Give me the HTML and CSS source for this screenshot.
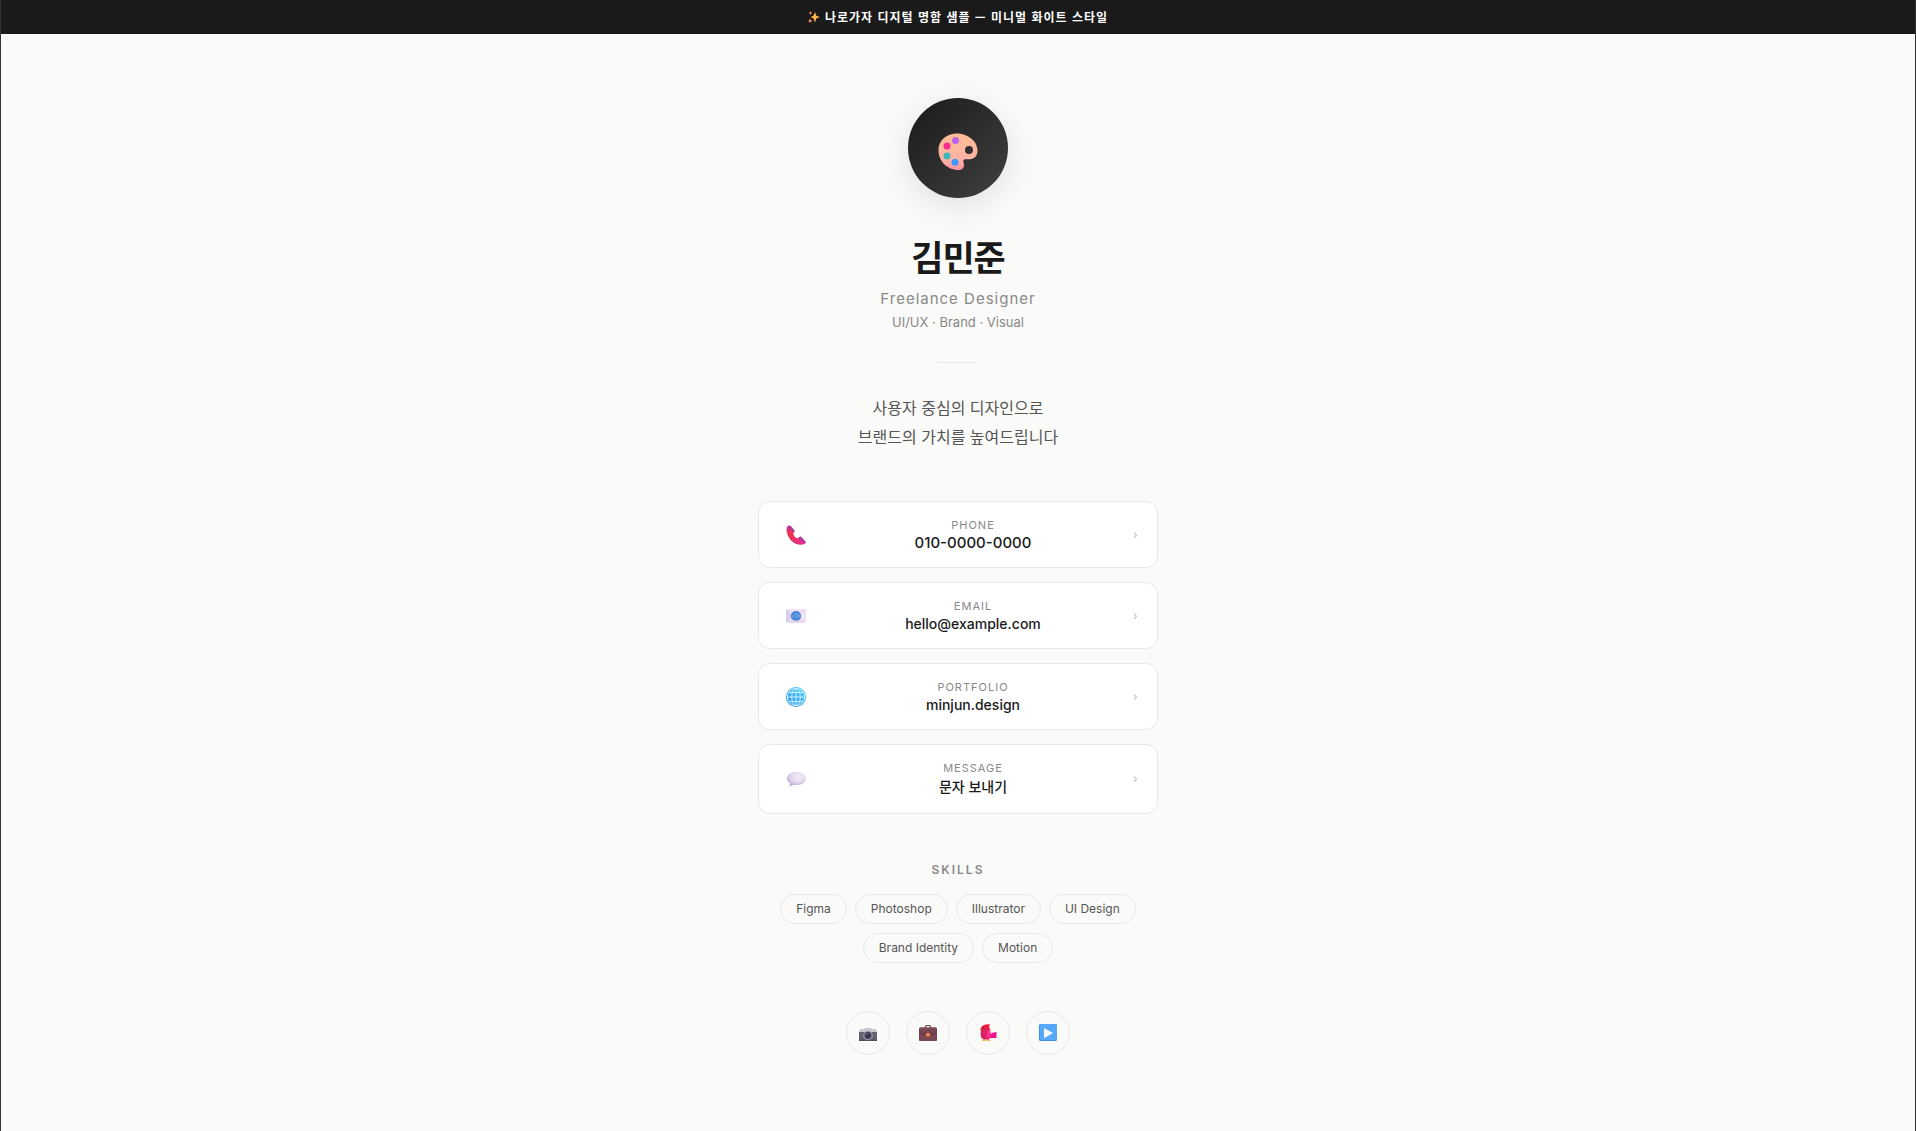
FILE: index.html
```html
<!DOCTYPE html>
<html lang="ko">
<head>
<meta charset="utf-8">
<meta name="viewport" content="width=device-width, initial-scale=1">
<title>김민준 — Freelance Designer</title>
<link rel="stylesheet" href="styles.css">
</head>
<body>
<div class="banner">
  <svg class="banner-icon" viewBox="0 0 24 24" aria-hidden="true"><path fill="#ffb54c" d="M14 2l2.6 7.4L24 12l-7.4 3L14 23l-3-8-6-3 6-2.6z"/><path fill="#ff9a62" d="M5 0l1.200 3L9 4 6.200 5.200 5 8 3.800 5.200 1 4l2.800-1zM4 15l1.500 3.500L9 20l-3.500 1.300L4 24l-1.300-2.700L0 20l2.700-1.500z"/></svg>
  <span>나로가자 디지털 명함 샘플 — 미니멀 화이트 스타일</span>
</div>
<main class="card">
  <header class="profile">
    <div class="avatar">
      <svg viewBox="0 0 40 38" aria-hidden="true">
        <defs>
          <linearGradient id="pal" x1="0" y1="0" x2="0" y2="1"><stop offset="0" stop-color="#ffbd94"/><stop offset=".7" stop-color="#ffb3a5"/><stop offset="1" stop-color="#f9929f"/></linearGradient>
        </defs>
        <path fill="url(#pal)" fill-rule="evenodd" d="M18 .500C28 0 39.500 7 39.500 17.500c0 6-3.500 8.800-9 8.800h-3c-2 0-2.600 1.200-2 3.200.8 2.500 1.200 7.500-5 7.500C9 37 .500 28 .500 17 .500 7.500 8 1 18 .500zM31 13a4 4 0 1 0 0 8 4 4 0 0 0 0-8z"/>
        <circle cx="17.500" cy="7.500" r="3.500" fill="#b963f0"/><circle cx="9" cy="13" r="3.500" fill="#f82f92"/><circle cx="9" cy="23" r="3.500" fill="#40b9b9"/><circle cx="17" cy="29.300" r="3.500" fill="#4096f8"/>
      </svg>
    </div>
    <h1 class="name">김민준</h1>
    <p class="role">Freelance Designer</p>
    <p class="fields">UI/UX · Brand · Visual</p>
  </header>
  <hr class="divider">
  <p class="bio">사용자 중심의 디자인으로<br>브랜드의 가치를 높여드립니다</p>
  <nav class="contacts" aria-label="연락처">
    <a class="contact" href="tel:010-0000-0000">
      <span class="contact-icon"><svg viewBox="0 0 20 20" aria-hidden="true"><defs><linearGradient id="ph" x1="0" y1="0" x2="1" y2="1"><stop offset="0" stop-color="#b03a9c"/><stop offset=".25" stop-color="#ef3350"/><stop offset=".65" stop-color="#ec3070"/><stop offset="1" stop-color="#d8309f"/></linearGradient></defs><path fill="url(#ph)" d="M1 2C2 0 4 0 5 1.500l3.500 4c.8 1-1.500 2.700-1.200 3.500.7 2.200 2.200 3.700 4.200 4.300 1 .3 2-2.200 3.200-1.600l4.500 4.500c1 1 .6 2-.4 2.600-3 1.700-8.500 1.500-12.500-2.200C2 12.800-.500 6 1 2z"/><path fill="#a23aad" d="M4.500 1l4 4.500-1.500 2L3 2zM14.500 11.500l5 5-2 .5-4.500-4z"/></svg></span>
      <span class="contact-text"><span class="contact-label">PHONE</span><span class="contact-value contact-number">010-0000-0000</span></span>
      <span class="chevron" aria-hidden="true">›</span>
    </a>
    <a class="contact" href="mailto:hello@example.com">
      <span class="contact-icon"><svg viewBox="0 0 20 20" aria-hidden="true"><rect y="3" width="20" height="14" rx="1" fill="#e4d8ee"/><path fill="#d9cbea" d="M0 16V4l8 6z"/><path fill="#f0e3f2" d="M20 16V4l-8 6zM1 3h18l-9 7z"/><circle cx="10" cy="10" r="5" fill="#327cd4"/><path fill="none" stroke="#a5c2ee" stroke-width=".7" d="M12.800 12.800A3.600 3.600 0 1 1 13.600 10c0 2-1.800 2-1.800.3V8.500"/><circle cx="10" cy="10" r="1.600" fill="none" stroke="#a5c2ee" stroke-width=".7"/></svg></span>
      <span class="contact-text"><span class="contact-label">EMAIL</span><span class="contact-value">hello@example.com</span></span>
      <span class="chevron" aria-hidden="true">›</span>
    </a>
    <a class="contact" href="https://minjun.design">
      <span class="contact-icon"><svg viewBox="0 0 20 20" aria-hidden="true"><defs><linearGradient id="gl" x1="1" y1="0" x2="0" y2="1"><stop offset="0" stop-color="#48d2ff"/><stop offset="1" stop-color="#358be8"/></linearGradient></defs><circle cx="10" cy="10" r="10" fill="url(#gl)"/><g fill="none" stroke="#c9f2ff" stroke-width="1"><ellipse cx="10" cy="10" rx="4.300" ry="8.700"/><circle cx="10" cy="10" r="8.600"/><path d="M10 1v18M1 10h18M3 5.500h14M3 14.500h14"/></g></svg></span>
      <span class="contact-text"><span class="contact-label">PORTFOLIO</span><span class="contact-value">minjun.design</span></span>
      <span class="chevron" aria-hidden="true">›</span>
    </a>
    <a class="contact contact-tall" href="sms:010-0000-0000">
      <span class="contact-icon"><svg viewBox="0 0 20 20" aria-hidden="true"><defs><radialGradient id="ms" cx=".6" cy=".35" r=".65"><stop offset="0" stop-color="#f3edf5"/><stop offset=".6" stop-color="#e3d9ec"/><stop offset="1" stop-color="#bcaed6"/></radialGradient></defs><path fill="url(#ms)" d="M10.500 3C16 3 20 5.700 20 9.500S16 16 10.500 16c-1 0-2-.1-3-.3-1 .8-2 1.300-3.500 1.300-.8 0-.6-.6-.2-1l.5-1.500C2.300 13.300 1 11.500 1 9.500 1 5.700 5 3 10.500 3z"/></svg></span>
      <span class="contact-text"><span class="contact-label">MESSAGE</span><span class="contact-value">문자 보내기</span></span>
      <span class="chevron" aria-hidden="true">›</span>
    </a>
  </nav>
  <section class="skills">
    <h2 class="skills-title">SKILLS</h2>
    <ul class="chips">
      <li class="chip">Figma</li>
      <li class="chip">Photoshop</li>
      <li class="chip">Illustrator</li>
      <li class="chip">UI Design</li>
      <li class="chip">Brand Identity</li>
      <li class="chip">Motion</li>
    </ul>
  </section>
  <footer class="socials">
    <a class="social" href="#instagram" aria-label="Instagram"><svg viewBox="0 0 18 18" aria-hidden="true"><path fill="#c9c6d3" d="M0 6.500L1.500 5H5l1-1h6l1 1h3.500L18 6.500V9H0z"/><path fill="#626270" d="M0 8h18v8.500H0z"/><path fill="#505060" d="M0 15.500h18V17H0z"/><circle cx="9" cy="11.500" r="4.700" fill="#aaa8b6"/><circle cx="9" cy="11.500" r="3.700" fill="#49445a"/><circle cx="9" cy="11.500" r="2" fill="#342f48"/><circle cx="8" cy="10.500" r=".8" fill="#837d95"/></svg></a>
    <a class="social" href="#work" aria-label="LinkedIn"><svg viewBox="0 0 18 18" aria-hidden="true"><path fill="none" stroke="#6d484b" stroke-width="1.200" d="M6.500 4V2.500q0-1 1-1h3q1 0 1 1V4"/><rect y="3.500" width="18" height="13.500" rx="1.300" fill="#784550"/><path fill="#66394a" d="M0 9h18v1.200l-9 .8-9-.8z"/><path fill="#855459" d="M1 3.500h16l1 1.300H0z"/><rect x="7" y="9" width="4" height="3.500" rx=".5" fill="#e5844c"/></svg></a>
    <a class="social" href="#twitter" aria-label="Twitter"><svg viewBox="0 0 18 18" aria-hidden="true"><path fill="#f6a53a" d="M2 3.500L.500 5 2 7zM4.500 14H6v2.500h2V17H3.500zM8.500 14H10v2.500h2V17H8z"/><path fill="#ef193e" d="M2.200 4C3 1.500 5 .300 11 .300L10 3l1.500 3L10 12H6z"/><path fill="#dc2266" d="M2 4C4 2.500 7 3 8.500 6l3 4-1 5c-1.800.8-5.500.8-7.500-.5C.800 12 2 8 2 4z"/><path fill="#f8358c" d="M9.500 5l3 5-2 5L7 12z"/><path fill="#f0148c" d="M12 9l5.500-1v6H10z"/><path fill="#f7a9d0" d="M10.200 5.500L13 9l-1 1.500z"/><circle cx="4.300" cy="4" r=".7" fill="#4b2139"/></svg></a>
    <a class="social" href="#youtube" aria-label="YouTube"><svg viewBox="0 0 18 18" aria-hidden="true"><rect y="0" width="18" height="17" rx="1.500" fill="#3f8ee8"/><rect x="1" y="0" width="17" height="16" rx="1.500" fill="#56a8fa"/><path fill="#fbf5ff" d="M5 4v10.200L14 9z"/></svg></a>
  </footer>
</main>
</body>
</html>
```

FILE: styles.css
```css
* {
  box-sizing: border-box;
  margin: 0;
  padding: 0;
}

body {
  min-height: 100vh;
  border: 0 solid #333;
  border-width: 0 1px;
  background: #fafaf8;
  color: #1a1a1a;
  font-family: "Inter", "Noto Sans CJK KR", sans-serif;
}

a {
  color: inherit;
  text-decoration: none;
}

svg {
  display: block;
}

.banner {
  display: flex;
  align-items: center;
  justify-content: center;
  gap: 5px;
  padding: 8px 16px;
  background: #1a1a1a;
  color: #fff;
  font-family: "Noto Sans CJK KR", sans-serif;
  font-size: 12px;
  font-weight: 600;
  line-height: 18px;
  letter-spacing: 1px;
}

.banner-icon {
  width: 12px;
  height: 12px;
}

.card {
  display: flex;
  flex-direction: column;
  align-items: center;
  width: 100%;
  max-width: 448px;
  margin: 0 auto;
  padding: 64px 24px 76px;
  text-align: center;
}

.avatar {
  display: grid;
  place-items: center;
  width: 100px;
  height: 100px;
  margin: 0 auto 33px;
  padding-top: 8px;
  border-radius: 50%;
  background: linear-gradient(135deg, #1a1a1a, #404040);
  box-shadow: 0 8px 32px rgba(0, 0, 0, 0.1);
}

.avatar svg {
  width: 40px;
  height: 38px;
}

.name {
  font-size: 35px;
  font-weight: 700;
  line-height: 54px;
  letter-spacing: -1px;
}

.role {
  margin-top: 4px;
  color: #888;
  font-size: 15px;
  line-height: 20px;
  letter-spacing: 1px;
}

.fields {
  margin-top: 3px;
  color: #888;
  font-size: 13px;
  line-height: 20px;
}

.divider {
  width: 40px;
  height: 1px;
  margin: 30px 0 31px;
  border: 0;
  background: #e5e5e5;
}

.bio {
  color: #555;
  font-size: 16px;
  line-height: 29px;
}

.contacts {
  display: flex;
  flex-direction: column;
  gap: 14px;
  width: 100%;
  margin-top: 49px;
}

.contact {
  display: flex;
  align-items: center;
  gap: 16px;
  padding: 15px 20px;
  border: 1px solid #e8e8e8;
  border-radius: 12px;
  background: #fff;
}

.contact-icon {
  display: grid;
  place-items: center;
  width: 34px;
}

.contact-icon svg {
  width: 20px;
  height: 20px;
}

.contact-text {
  display: flex;
  flex: 1;
  flex-direction: column;
}

.contact-label {
  color: #888;
  font-size: 11px;
  line-height: 16px;
  letter-spacing: 1px;
}

.contact-value {
  font-size: 14px;
  font-weight: 500;
  line-height: 19px;
}

.contact-number {
  font-size: 15px;
}

.contact-tall .contact-value {
  line-height: 22px;
}

.chevron {
  width: 4px;
  color: #bbb;
  font-size: 12px;
  line-height: 16px;
}

.skills {
  width: 100%;
  margin-top: 48px;
}

.skills-title {
  color: #888;
  font-size: 12px;
  font-weight: 600;
  line-height: 16px;
  letter-spacing: 2px;
}

.chips {
  display: flex;
  flex-wrap: wrap;
  justify-content: center;
  gap: 9px 8px;
  margin-top: 16px;
  padding: 0 16px;
  list-style: none;
}

.chip {
  padding: 5px 15px;
  border: 1px solid #e8e8e8;
  border-radius: 20px;
  color: #555;
  font-size: 12px;
  line-height: 18px;
}

.socials {
  display: flex;
  gap: 16px;
  margin-top: 48px;
}

.social {
  display: grid;
  place-items: center;
  width: 44px;
  height: 44px;
  border: 1px solid #e8e8e8;
  border-radius: 50%;
}

.social svg {
  width: 18px;
  height: 18px;
}
```
